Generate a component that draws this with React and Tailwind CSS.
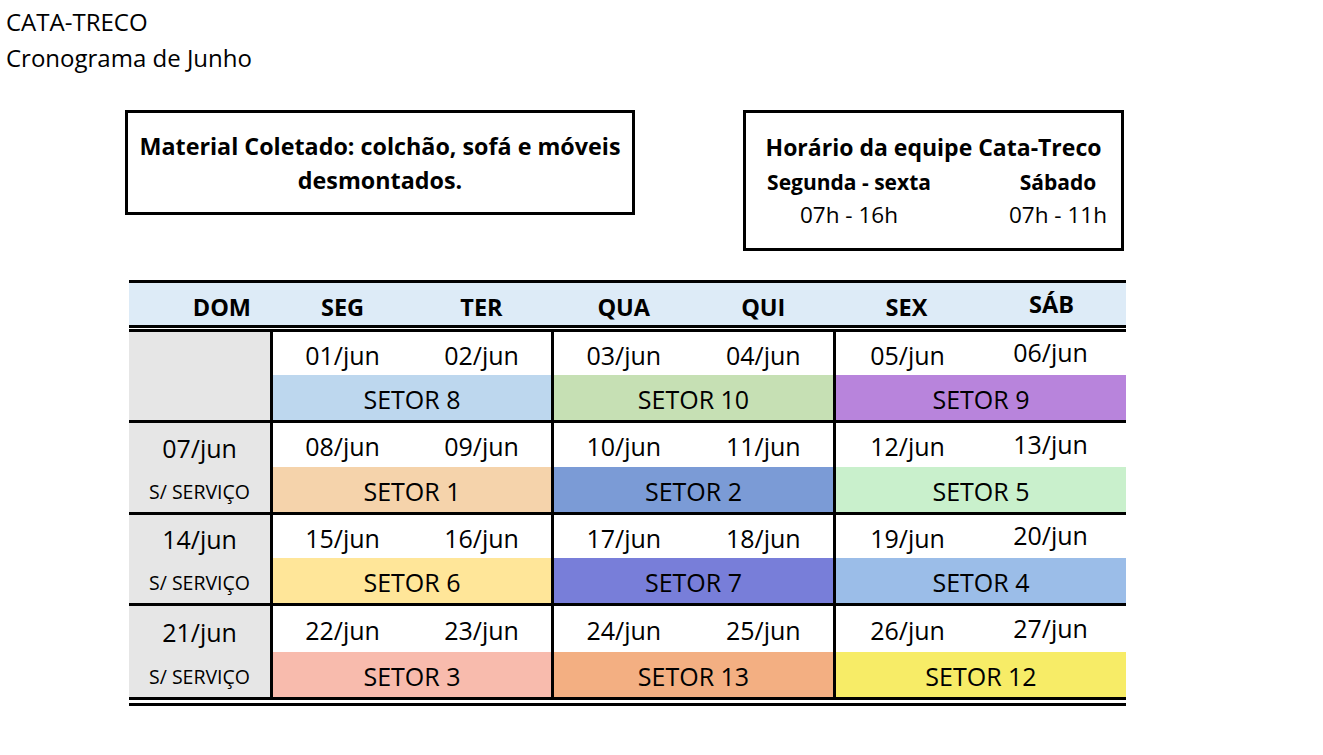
const rows = [
  {
    dom: null,
    groups: [
      { dates: ["01/jun", "02/jun"], setor: "SETOR 8", bg: "bg-[#bdd7ee]" },
      { dates: ["03/jun", "04/jun"], setor: "SETOR 10", bg: "bg-[#c6e0b4]" },
      { dates: ["05/jun", "06/jun"], setor: "SETOR 9", bg: "bg-[#b884dc]", raise: true },
    ],
    h: "h-[88px]",
  },
  {
    dom: "07/jun",
    groups: [
      { dates: ["08/jun", "09/jun"], setor: "SETOR 1", bg: "bg-[#f5d3ab]" },
      { dates: ["10/jun", "11/jun"], setor: "SETOR 2", bg: "bg-[#7b9bd6]" },
      { dates: ["12/jun", "13/jun"], setor: "SETOR 5", bg: "bg-[#c9f0cc]", raise: true },
    ],
    h: "h-[89px]",
  },
  {
    dom: "14/jun",
    groups: [
      { dates: ["15/jun", "16/jun"], setor: "SETOR 6", bg: "bg-[#ffe699]" },
      { dates: ["17/jun", "18/jun"], setor: "SETOR 7", bg: "bg-[#787ed9]" },
      { dates: ["19/jun", "20/jun"], setor: "SETOR 4", bg: "bg-[#9bbde8]", raise: true },
    ],
    h: "h-[88px]",
  },
  {
    dom: "21/jun",
    groups: [
      { dates: ["22/jun", "23/jun"], setor: "SETOR 3", bg: "bg-[#f8bbad]" },
      { dates: ["24/jun", "25/jun"], setor: "SETOR 13", bg: "bg-[#f3af82]" },
      { dates: ["26/jun", "27/jun"], setor: "SETOR 12", bg: "bg-[#f7ec67]", raise: true },
    ],
    h: "h-[91px]",
  },
];

const groupW = ["w-[281px]", "w-[282px]", "w-[293px]"];

function Group({ g, w }) {
  return (
    <div className={`${w} flex flex-col border-l-[3px] border-black`}>
      <div className="flex-1 flex">
        <div className="flex-1 flex items-center justify-center pt-[3px]">{g.dates[0]}</div>
        <div
          className={`flex-1 flex items-center justify-center ${g.raise ? "pb-[2px] pr-[4px]" : "pt-[3px]"}`}
        >
          {g.dates[1]}
        </div>
      </div>
      <div className={`h-[45px] flex items-center justify-center pt-[4px] ${g.bg}`}>{g.setor}</div>
    </div>
  );
}

export default function App() {
  return (
    <div
      className="w-[1323px] h-[755px] bg-white text-black leading-none"
      style={{ fontFamily: "'Open Sans', 'Noto Sans', sans-serif" }}
    >
      <div className="pl-[6px] pt-[4px] text-[24px]">
        <div className="h-[36px] flex items-center">CATA-TRECO</div>
        <div className="h-[36px] flex items-center">Cronograma de Junho</div>
      </div>

      <div className="flex items-start ml-[125px] mt-[34px]">
        <div className="w-[510px] h-[105px] border-[3px] border-black flex flex-col items-center justify-center gap-[10px] font-bold text-[23.3px] pt-[2px]">
          <div>Material Coletado: colchão, sofá e móveis</div>
          <div>desmontados.</div>
        </div>
        <div className="ml-[108px] w-[381px] h-[141px] border-[3px] border-black flex flex-col items-center pt-[23px] font-bold">
          <div className="text-[23px]">Horário da equipe Cata-Treco</div>
          <div className="w-full flex justify-between mt-[13px]">
            <div className="w-[206px] flex flex-col items-center gap-[11px]">
              <span className="text-[21px]">Segunda - sexta</span>
              <span className="font-normal text-[22.5px]">07h - 16h</span>
            </div>
            <div className="w-[126px] flex flex-col items-center gap-[11px]">
              <span className="text-[21px]">Sábado</span>
              <span className="font-normal text-[22.5px]">07h - 11h</span>
            </div>
          </div>
        </div>
      </div>

      <div className="ml-[129px] mt-[29px] w-[997px] text-[25px]">
        <div className="border-t-[3px] border-black bg-[#ddebf7] h-[45px] flex font-bold text-[23.5px]">
          <div className="w-[141px] flex items-center justify-end pr-[19px] pt-[7px]">DOM</div>
          <div className="w-[281px] flex pl-[3px] pt-[7px]">
            <div className="flex-1 flex items-center justify-center">SEG</div>
            <div className="flex-1 flex items-center justify-center">TER</div>
          </div>
          <div className="w-[282px] flex pl-[3px] pt-[7px]">
            <div className="flex-1 flex items-center justify-center">QUA</div>
            <div className="flex-1 flex items-center justify-center">QUI</div>
          </div>
          <div className="w-[293px] flex pl-[3px]">
            <div className="flex-1 flex items-center justify-center pt-[7px] pr-[4px]">SEX</div>
            <div className="flex-1 flex items-center justify-center pt-[2px] pr-[4px]">SÁB</div>
          </div>
        </div>
        <div className="h-[7px] border-y-[3px] border-black" />

        {rows.map((r, i) => (
          <div key={i}>
            {i > 0 && <div className="h-[3px] bg-black" />}
            <div className={`${r.h} flex`}>
              <div className="w-[141px] bg-[#e6e6e6] flex flex-col">
                {r.dom && (
                  <>
                    <div className="flex-1 flex items-center justify-center pt-[6px]">{r.dom}</div>
                    <div className="h-[45px] flex items-center justify-center text-[19.5px] pt-[4px]">
                      S/ SERVIÇO
                    </div>
                  </>
                )}
              </div>
              {r.groups.map((g, j) => (
                <Group key={j} g={g} w={groupW[j]} />
              ))}
            </div>
          </div>
        ))}
        <div className="h-[9px] border-t-[3px] border-b-[3px] border-black" />
      </div>
    </div>
  );
}
